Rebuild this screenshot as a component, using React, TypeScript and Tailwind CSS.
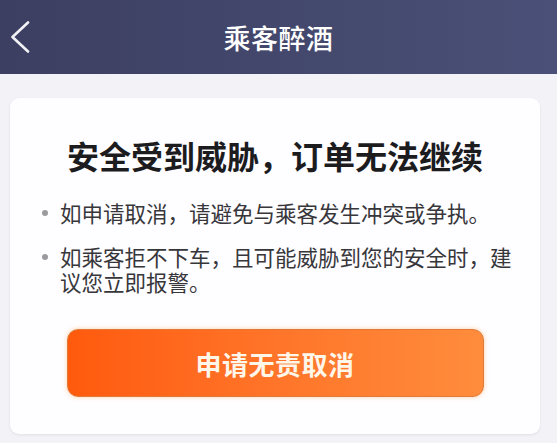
import React from 'react';

const font = { fontFamily: '"Noto Sans CJK SC", "Noto Sans", sans-serif' };

function Bullet({ children }: { children: React.ReactNode }) {
  return (
    <li className="flex items-start">
      <span className="w-[22px] h-[25px] flex items-center shrink-0">
        <span className="w-[6px] h-[6px] rounded-full bg-[#9a9a9f] ml-[4px]" />
      </span>
      <span className="flex-1">{children}</span>
    </li>
  );
}

export default function App() {
  return (
    <div className="w-[557px] h-[443px] bg-[#f3f2f6] overflow-hidden" style={font}>
      {/* Header */}
      <header className="h-[74px] grid grid-cols-[60px_1fr_60px] items-center bg-gradient-to-r from-[#3c3f61] to-[#4a5077]">
        <button type="button" className="h-full flex items-center pl-[10px]">
          <svg width="20" height="32" viewBox="0 0 20 32" fill="none">
            <path d="M18 1.5 L2.5 16 L18 30.5" stroke="#f2f2f6" strokeWidth="2.6" strokeLinecap="round" strokeLinejoin="round" />
          </svg>
        </button>
        <h1 className="text-center text-[27px] leading-none font-medium text-white tracking-[0.5px]">
          乘客醉酒
        </h1>
        <div />
      </header>

      {/* Card */}
      <main className="pt-[24px] pl-[10px]">
        <section className="w-[530px] rounded-[9px] bg-[#fefdff] shadow-[0_1px_3px_rgba(0,0,0,0.08)] px-[28px] pt-[37px] pb-[37px]">
          <h2 className="text-center text-[32px] leading-[40px] font-bold text-[#1c1c1f]">
            安全受到威胁，订单无法继续
          </h2>

          <ul className="mt-[25px] flex flex-col gap-[19px] text-[21.5px] leading-[25px] text-[#37373b]">
            <Bullet>如申请取消，请避免与乘客发生冲突或争执。</Bullet>
            <Bullet>如乘客拒不下车，且可能威胁到您的安全时，建议您立即报警。</Bullet>
          </ul>

          <button
            type="button"
            className="mt-[35px] mx-auto w-[417px] h-[68px] flex items-center justify-center rounded-[11px] border border-[#e07a3a] bg-gradient-to-r from-[#ff5a0c] to-[#ff8c3c] shadow-[0_0_4px_rgba(255,170,80,0.55)] text-[26px] font-bold text-[#fff6ea] tracking-[0.5px]"
          >
            申请无责取消
          </button>
        </section>
      </main>
    </div>
  );
}
